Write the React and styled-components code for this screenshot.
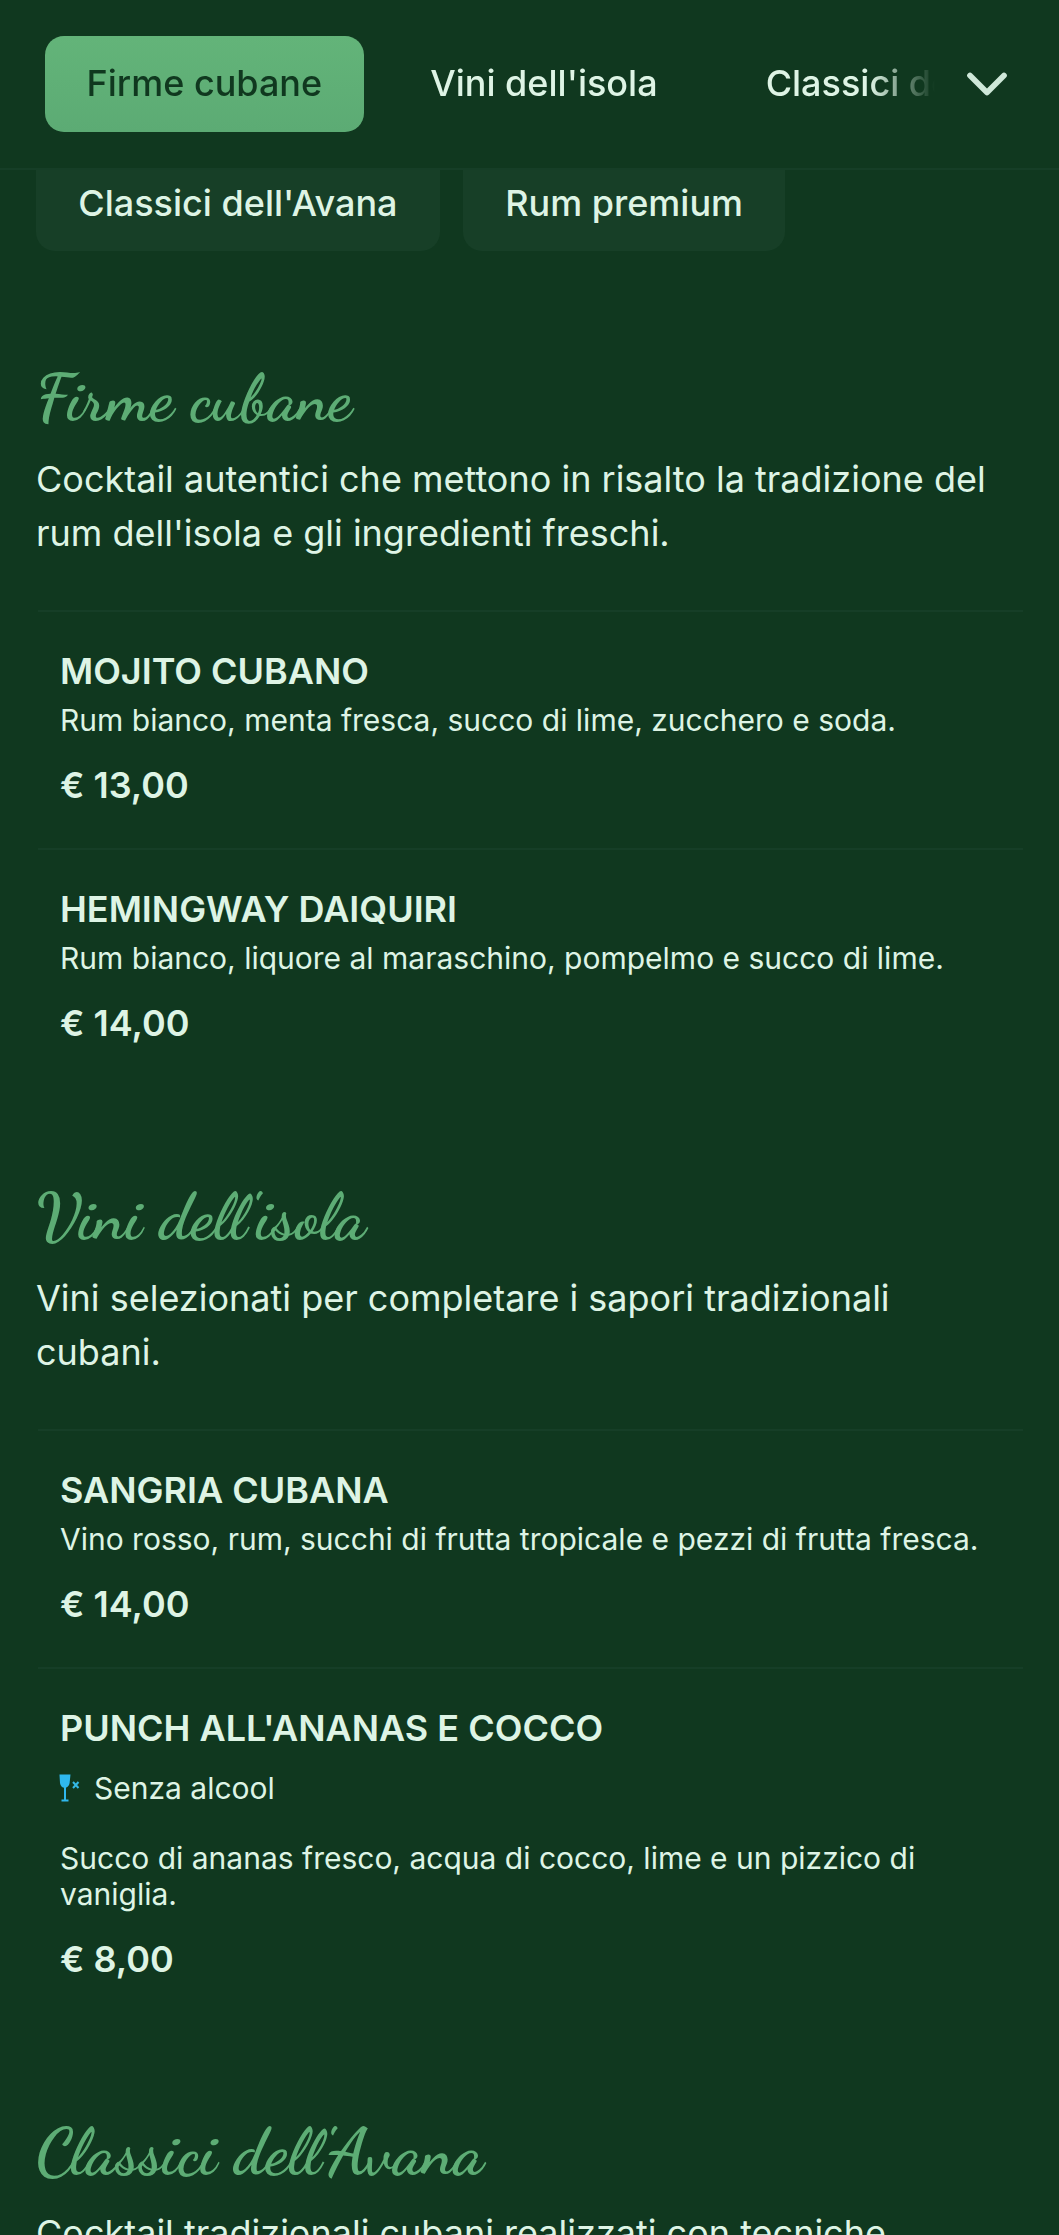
import React from "react";
import styled, { createGlobalStyle } from "styled-components";
import { ChevronDown } from "lucide-react";

const Global = createGlobalStyle`
  html, body { margin: 0; padding: 0; background: #10381f; }
  body { font-family: Inter, "Noto Sans", sans-serif; color: #def4e5; overflow: hidden; }
`;
const Page = styled.div`
  width: 1059px; height: 2235px; overflow: hidden; background: #10381f;
  display: flex; flex-direction: column;
`;
const Header = styled.header`
  height: 170px; flex: none; box-sizing: border-box; display: flex; align-items: center;
  padding: 0 0 0 45px; background: #10381f; border-bottom: 2px solid #163e27;
`;
const TabScroller = styled.nav`
  flex: none; width: 900px; display: flex; gap: 25px; overflow: hidden;
  mask-image: linear-gradient(to right, #000 825px, transparent 890px);
`;
const Tab = styled.span`
  flex: none; box-sizing: border-box; height: 96px; padding: 0 41.5px 2px; display: flex; align-items: center;
  font-size: 36px; font-weight: 500; border-radius: 19px; white-space: nowrap;
  color: ${p => (p.$active ? "#10381f" : "#def4e5")};
  background: ${p => (p.$active ? "linear-gradient(180deg,#63b479,#5cab74)" : "transparent")};
`;
const ChevronWrap = styled.span`
  display: flex; margin-left: 8px; color: #cfe8d9;
`;
const PillRow = styled.div`
  flex: none; display: flex; gap: 23px; padding: 0 0 0 36px;
`;
const Pill = styled.span`
  box-sizing: border-box; height: 81px; padding: 0 42.3px 15px; display: flex; align-items: center;
  font-size: 36px; font-weight: 500; background: #173f27; border-radius: 0 0 19px 19px; white-space: nowrap;
`;
const Section = styled.section`
  padding: 0 36px; flex: none; margin-top: ${p => p.$top}px;
`;
const SectionTitle = styled.h2`
  margin: 0 0 7px; height: 95px; line-height: 95px; font-family: "Dancing Script", cursive;
  font-weight: 700; font-size: 66px; color: #5dad75;
`;
const SectionText = styled.p`
  margin: 0 0 50px; max-width: 960px; font-size: 36px; line-height: 54px;
`;
const Item = styled.article`
  margin-left: 2px; border-top: 2px solid #163e27; padding: 36px 22px 40px;
`;
const ItemTitle = styled.h3`
  margin: 0; font-size: 36px; line-height: 46px; font-weight: 600;
`;
const ItemText = styled.p`
  margin: 8px 0 0; font-size: 30px; line-height: 36px;
`;
const Price = styled.div`
  margin-top: 24px; font-size: 36px; line-height: 46px; font-weight: 600;
`;
const Badge = styled.div`
  display: flex; align-items: center; gap: 14px; margin: 17px 0 32px; font-size: 30px; line-height: 40px;
`;
const NoAlcoholSvg = styled.svg`
  flex: none; margin-left: -1px;
`;
const NoAlcohol = () => (
  <NoAlcoholSvg width="21" height="28" viewBox="0 0 21 28" fill="none">
    <path d="M.5.5h11l-.9 8.5c-.4 3-2.5 4.8-5 4.8S1.4 12 1 9z" fill="#2fb8ee" />
    <path d="M6 13v13M2.5 26.5h7" stroke="#2fb8ee" strokeWidth="2" />
    <path d="M14 8l5.5 6M19.5 8L14 14" stroke="#35b8e4" strokeWidth="2" />
  </NoAlcoholSvg>
);

const sections = [
  { top: 99, title: "Firme cubane", text: "Cocktail autentici che mettono in risalto la tradizione del rum dell'isola e gli ingredienti freschi.", items: [
    { t: "MOJITO CUBANO", d: "Rum bianco, menta fresca, succo di lime, zucchero e soda.", p: "€ 13,00" },
    { t: "HEMINGWAY DAIQUIRI", d: "Rum bianco, liquore al maraschino, pompelmo e succo di lime.", p: "€ 14,00" },
  ]},
  { top: 83, title: "Vini dell'isola", text: "Vini selezionati per completare i sapori tradizionali cubani.", items: [
    { t: "SANGRIA CUBANA", d: "Vino rosso, rum, succhi di frutta tropicale e pezzi di frutta fresca.", p: "€ 14,00" },
    { t: "PUNCH ALL'ANANAS E COCCO", badge: true, d: "Succo di ananas fresco, acqua di cocco, lime e un pizzico di vaniglia.", p: "€ 8,00" },
  ]},
  { top: 82, title: "Classici dell'Avana", text: "Cocktail tradizionali cubani realizzati con tecniche", items: [] },
];

export default function App() {
  return (
    <Page>
      <Global />
      <Header>
        <TabScroller>
          <Tab $active>Firme cubane</Tab>
          <Tab>Vini dell'isola</Tab>
          <Tab>Classici dell'Avana</Tab>
        </TabScroller>
        <ChevronWrap><ChevronDown size={68} strokeWidth={2} /></ChevronWrap>
      </Header>
      <PillRow>
        <Pill>Classici dell'Avana</Pill>
        <Pill>Rum premium</Pill>
      </PillRow>
      {sections.map(s => (
        <Section key={s.title} $top={s.top}>
          <SectionTitle>{s.title}</SectionTitle>
          <SectionText>{s.text}</SectionText>
          {s.items.map(i => (
            <Item key={i.t}>
              <ItemTitle>{i.t}</ItemTitle>
              {i.badge && <Badge><NoAlcohol />Senza alcool</Badge>}
              <ItemText>{i.d}</ItemText>
              <Price>{i.p}</Price>
            </Item>
          ))}
        </Section>
      ))}
    </Page>
  );
}
